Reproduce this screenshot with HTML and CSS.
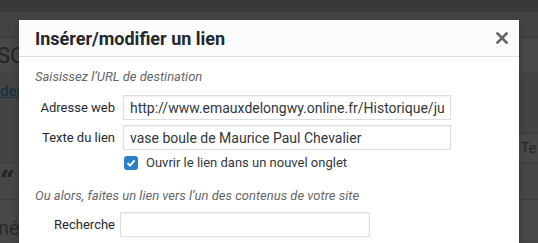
FILE: index.html
```html
<!doctype html>
<html lang="fr">

<head>
  <meta charset="UTF-8" />
  <meta name="viewport" content="width=device-width, initial-scale=1.0" />
  <title>Insérer/modifier un lien</title>
  <link rel="stylesheet" href="styles.css">
</head>

<body>
  <div class="admin">
    <div class="admin-top"></div>
    <div class="admin-row row-a"></div>
    <div class="admin-row row-b"><span class="bg-title">SOI</span></div>
    <div class="admin-row row-c">
      <span class="bg-link">des-</span>
      <span class="bg-tab">Te</span>
    </div>
    <div class="admin-row row-d"><span class="bg-quote">&ldquo;</span></div>
    <div class="admin-row row-e"><span class="bg-text">nés</span></div>
  </div>

  <div class="modal">
    <div class="modal-head">
      <h1>Insérer/modifier un lien</h1>
      <button class="close" type="button" aria-label="Fermer">
        <svg width="12" height="12" viewBox="0 0 12 12">
          <path d="M1.5 1.5 L10.5 10.5 M10.5 1.5 L1.5 10.5" stroke="#666" stroke-width="2.6" stroke-linecap="square" />
        </svg>
      </button>
    </div>
    <div class="modal-body">
      <p class="howto">Saisissez l’URL de destination</p>
      <div class="field">
        <label for="url">Adresse web</label>
        <input type="text" id="url" value="http://www.emauxdelongwy.online.fr/Historique/jules-vieillard.htm" />
      </div>
      <div class="field">
        <label for="text">Texte du lien</label>
        <input type="text" id="text" value="vase boule de Maurice Paul Chevalier" />
      </div>
      <div class="check">
        <span class="box">
          <svg width="10" height="10" viewBox="0 0 10 10">
            <path d="M1.5 5.2 L4 7.6 L8.6 2.4" fill="none" stroke="#fff" stroke-width="1.8" />
          </svg>
        </span>
        <span>Ouvrir le lien dans un nouvel onglet</span>
      </div>
      <p class="howto alt">Ou alors, faites un lien vers l’un des contenus de votre site</p>
      <div class="field search">
        <label for="search">Recherche</label>
        <input type="search" id="search" />
      </div>
    </div>
  </div>
</body>

</html>
```

FILE: styles.css
```css
html,
body {
  overflow: hidden;
}

body {
  margin: 0;
  width: 538px;
  height: 243px;
  position: relative;
  background-color: #444;
  font-family: 'Roboto', 'Liberation Sans', sans-serif;
}

.admin {
  display: flex;
  flex-direction: column;
}

.admin-top {
  height: 12px;
  background-color: #393939;
}

.admin-row {
  display: flex;
  justify-content: space-between;
  border-bottom: 1px solid #3c3c3c;
}

.row-a {
  height: 25px;
  background-color: #434343;
}

.row-b {
  height: 35px;
  background-color: #474747;
  align-items: center;
}

.bg-title {
  margin-left: -3px;
  font-size: 22px;
  color: #232323;
}

.row-c {
  height: 88px;
  background-color: #444;
  align-items: flex-start;
}

.bg-link {
  margin-top: 8px;
  font-size: 15px;
  font-weight: 500;
  color: #18323f;
  text-decoration: underline;
}

.bg-tab {
  margin-top: 59px;
  width: 17px;
  height: 28px;
  padding-left: 4px;
  background-color: #484848;
  border-top: 1px solid #3e3e3e;
  font-size: 14px;
  line-height: 28px;
  color: #262626;
  overflow: hidden;
}

.row-d {
  height: 36px;
  background-color: #464646;
}

.bg-quote {
  margin-top: 2px;
  font-family: 'DejaVu Serif', serif;
  font-weight: bold;
  font-size: 26px;
  line-height: 30px;
  color: #222;
}

.row-e {
  height: 41px;
  background-color: #474747;
  border-bottom: none;
}

.bg-text {
  margin-top: 16px;
  margin-left: -2px;
  font-size: 20px;
  line-height: 24px;
  color: #2a2a2a;
}

.modal {
  position: absolute;
  left: 19px;
  top: 20px;
  width: 500px;
  height: 223px;
  background-color: #fff;
  box-shadow: 0 3px 6px rgba(0, 0, 0, 0.3);
}

.modal-head {
  display: flex;
  align-items: center;
  justify-content: space-between;
  height: 36px;
  padding: 0 11px 0 16px;
  background-color: #fcfcfc;
  border-bottom: 1px solid #ddd;
}

h1 {
  margin: 0;
  font-size: 18px;
  font-weight: bold;
  color: #23282d;
}

.close {
  display: flex;
  padding: 0;
  border: none;
  background: none;
}

.modal-body {
  padding: 0 16px;
}

.howto {
  margin: 11px 0 9px;
  font-size: 13px;
  font-style: italic;
  color: #666;
  line-height: 18px;
}

.howto.alt {
  margin: 17px 0 7px;
}

.field {
  display: flex;
  align-items: center;
  margin-bottom: 5px;
}

.field label {
  flex-shrink: 0;
  width: 80px;
  margin-right: 8px;
  text-align: right;
  white-space: nowrap;
  font-size: 13px;
  color: #23282d;
}

.field input {
  box-sizing: border-box;
  width: 328px;
  height: 25px;
  margin: 0;
  padding: 0 6px;
  border: 1px solid #ddd;
  box-shadow: inset 0 1px 2px rgba(0, 0, 0, 0.07);
  font-family: 'Roboto', 'Liberation Sans', sans-serif;
  font-size: 14px;
  color: #32373c;
  outline: none;
}

.field.search input {
  width: 250px;
  margin-left: -3px;
}

.check {
  display: flex;
  align-items: center;
  margin-left: 89px;
  font-size: 13px;
  color: #32373c;
}

.box {
  display: flex;
  align-items: center;
  justify-content: center;
  width: 14px;
  height: 14px;
  margin-right: 8px;
  border-radius: 3px;
  background-color: #2d7fc6;
}
```
